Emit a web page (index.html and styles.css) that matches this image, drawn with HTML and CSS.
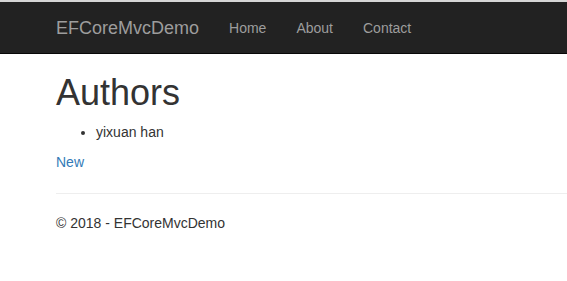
FILE: index.html
```html
<!DOCTYPE html>
<html lang="en">
<head>
    <meta charset="UTF-8">
    <meta name="viewport" content="width=device-width, initial-scale=1.0">
    <title>Index - EFCoreMvcDemo</title>
    <link rel="stylesheet" href="styles.css">
</head>
<body>
    <div class="top-edge"></div>
    <nav class="navbar">
        <div class="container navbar-inner">
            <a href="#" class="navbar-brand">EFCoreMvcDemo</a>
            <ul class="nav-links">
                <li><a href="#">Home</a></li>
                <li><a href="#">About</a></li>
                <li><a href="#">Contact</a></li>
            </ul>
        </div>
    </nav>
    <div class="container body-content">
        <h1 class="page-title">Authors</h1>
        <ul class="author-list">
            <li>yixuan han</li>
        </ul>
        <a href="#" class="new-link">New</a>
        <hr class="divider">
        <footer class="footer">
            <p>&copy; 2018 - EFCoreMvcDemo</p>
        </footer>
    </div>
</body>
</html>
```

FILE: styles.css
```css
body {
    margin: 0;
    font-family: "Liberation Sans", Arial, sans-serif;
    font-size: 14px;
    line-height: 1.42857;
    color: #333;
    background-color: #fff;
}

a {
    color: #337ab7;
    text-decoration: none;
}

.container {
    padding-left: 56px;
    padding-right: 0;
}

/* navigation bar ================================================== */

.top-edge {
    height: 2px;
    background-color: #d6d6d6;
}

.navbar {
    background-color: #222;
    border-bottom: 1px solid #080808;
    padding-top: 1px;
}

.navbar-inner {
    display: flex;
    align-items: center;
    height: 50px;
}

.navbar-brand {
    font-size: 18px;
    line-height: 20px;
    color: #9d9d9d;
    padding: 15px 15px 15px 0;
}

.nav-links {
    list-style-type: none;
    display: flex;
    margin: 0;
    padding: 0;
}

.nav-links a {
    display: block;
    color: #9d9d9d;
    line-height: 20px;
    padding: 15px;
}

/* page content ==================================================== */

.page-title {
    font-size: 36px;
    font-weight: 500;
    line-height: 1.1;
    margin: 19px 0 10px;
}

.author-list {
    margin: 0 0 10px;
    padding-left: 40px;
}

.new-link {
    display: inline-block;
}

.divider {
    margin: 20px 0;
    border: 0;
    border-top: 1px solid #eee;
}

.footer p {
    margin: 0 0 10px;
}
```
